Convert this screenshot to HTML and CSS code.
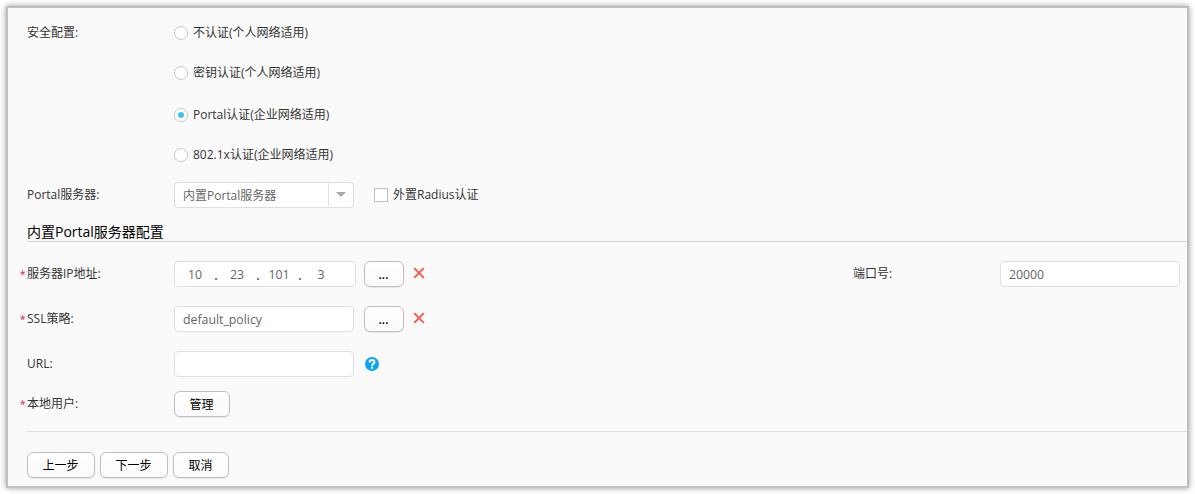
FILE: index.html
```
<!DOCTYPE html>
<html lang="zh-CN">
<head>
<meta charset="utf-8">
<title>安全配置</title>
<link rel="stylesheet" href="styles.css">
</head>
<body>
<main class="panel">
  <section class="security">
    <div class="label">安全配置:</div>
    <div class="options">
      <label class="option"><span class="radio"></span><span>不认证(个人网络适用)</span></label>
      <label class="option"><span class="radio"></span><span>密钥认证(个人网络适用)</span></label>
      <label class="option shifted"><span class="radio checked"></span><span>Portal认证(企业网络适用)</span></label>
      <label class="option"><span class="radio"></span><span>802.1x认证(企业网络适用)</span></label>
    </div>
  </section>
  <div class="row server">
    <div class="label">Portal服务器:</div>
    <div class="select"><span class="value">内置Portal服务器</span><span class="arrow"></span></div>
    <label class="check"><span class="box"></span><span>外置Radius认证</span></label>
  </div>
  <h2 class="heading">内置Portal服务器配置</h2>
  <div class="row field">
    <div class="label required">服务器IP地址:</div>
    <div class="input ip"><span class="octet">10</span><i>.</i><span class="octet">23</span><i>.</i><span class="octet">101</span><i>.</i><span class="octet">3</span></div>
    <button class="button browse">...</button>
    <svg class="clear" viewBox="0 0 12 12"><path d="M1.2 1.2 10.8 10.8M10.8 1.2 1.2 10.8"/></svg>
    <div class="port">
      <div class="port-label">端口号:</div>
      <div class="input digits">20000</div>
    </div>
  </div>
  <div class="row field">
    <div class="label required">SSL策略:</div>
    <div class="input policy">default_policy</div>
    <button class="button browse wide-gap">...</button>
    <svg class="clear" viewBox="0 0 12 12"><path d="M1.2 1.2 10.8 10.8M10.8 1.2 1.2 10.8"/></svg>
  </div>
  <div class="row field url">
    <div class="label">URL:</div>
    <div class="input"></div>
    <svg class="help" viewBox="0 0 14 14"><circle cx="7" cy="7" r="7"/><path d="M4.6 5.5C4.6 2.2 9.4 2.3 9.4 5 9.4 6.9 7 6.8 7 8.7"/><path d="M7 9.7V11.7"/></svg>
  </div>
  <div class="row">
    <div class="label required">本地用户:</div>
    <button class="button">管理</button>
  </div>
  <footer class="actions">
    <button class="button step">上一步</button>
    <button class="button step">下一步</button>
    <button class="button">取消</button>
  </footer>
</main>
</body>
</html>
```
FILE: styles.css
```
* { box-sizing: border-box; }

body {
  margin: 0;
  padding: 6px;
  height: 494px;
  overflow: hidden;
  background: #fff;
  color: #333;
  font: 12px/26px "Open Sans", "Noto Sans CJK SC", sans-serif;
}

.panel {
  width: 1183px;
  height: 482px;
  padding: 5px 0 0 19px;
  border: 2px solid #bfbfbf;
  background: #fafafa;
  box-shadow: 0 0 6px rgba(0, 0, 0, 0.4);
}

.security { display: flex; }
.security .label { line-height: 40px; }

.label {
  position: relative;
  flex: none;
  width: 147px;
  white-space: nowrap;
}

.required::before {
  content: "*";
  position: absolute;
  left: -7px;
  top: 0;
  color: #e0113a;
  font-size: 10px;
}

.option {
  display: flex;
  align-items: center;
  gap: 5px;
  height: 40px;
}
.option.shifted { margin-top: 2px; }

.radio {
  display: flex;
  width: 14px;
  height: 14px;
  border: 1px solid #c8c8c8;
  border-radius: 50%;
  background: #fff;
}
.radio.checked::after {
  content: "";
  width: 6px;
  height: 6px;
  margin: auto;
  border-radius: 50%;
  background: #3fc0fb;
}

.row { display: flex; height: 26px; }
.field { margin-bottom: 19px; }
.field.url { margin-bottom: 14px; }
.server { margin-top: 7px; }

.select, .input {
  width: 180px;
  height: 26px;
  border: 1px solid #dfdfdf;
  border-radius: 4px;
  background: #fff;
  color: #666;
  line-height: 25px;
}
.input { padding-left: 8px; }

.select { display: flex; }
.select .value { width: 153px; padding-left: 8px; line-height: 26px; }
.select .arrow {
  display: flex;
  width: 25px;
  height: 23px;
  border-left: 1px solid #dfdfdf;
}
.select .arrow::after {
  content: "";
  margin: 9px 0 0 7px;
  width: 10px;
  height: 5px;
  background: #aaa;
  clip-path: polygon(0 0, 100% 0, 50% 100%);
}

.check { display: flex; align-items: center; gap: 5px; margin-left: 20px; }
.box {
  width: 14px;
  height: 14px;
  border: 1px solid #c0c0c0;
  background: #fff;
}

.heading {
  height: 34px;
  margin: 0 0 19px;
  padding-top: 11px;
  border-bottom: 1px solid #d2d2d2;
  color: #000;
  font-size: 14px;
  font-weight: 400;
  line-height: 25px;
}

.ip { display: flex; width: 182px; padding-left: 6px; font-size: 12.3px; }
.ip .octet { width: 28px; text-align: center; line-height: 26px; }
.ip i { width: 14px; text-align: center; font-style: normal; font-weight: 700; line-height: 28px; }
.digits { font-size: 12.3px; }
.policy { font-size: 12.3px; }

.button {
  height: 26px;
  width: 56px;
  padding: 2px 1px 0 0;
  border: 1px solid #bfbfbf;
  border-radius: 6px;
  background: linear-gradient(#fff, #fafafa);
  box-shadow: 0 1px 1px rgba(0, 0, 0, 0.08);
  color: #000;
  font: inherit;
  line-height: 22px;
}
.browse { width: 40px; margin-left: 8px; font-weight: 600; }
.wide-gap { margin-left: 10px; }
.step { width: 68px; }

.clear {
  width: 12px;
  height: 12px;
  margin: 6px 0 0 9px;
  fill: none;
  stroke: #fa5a4b;
  stroke-width: 1.9;
}

.port { display: flex; margin: 0 7px 0 auto; }
.port-label { width: 147px; }

.help { width: 14px; height: 14px; margin: 6px 0 0 11px; }
.help circle { fill: #0aa5fa; }
.help path { fill: none; stroke: #fff; stroke-width: 2.1; }

.actions {
  display: flex;
  gap: 5px;
  margin-top: 14px;
  padding-top: 20px;
  border-top: 1px solid #dedede;
}
```
